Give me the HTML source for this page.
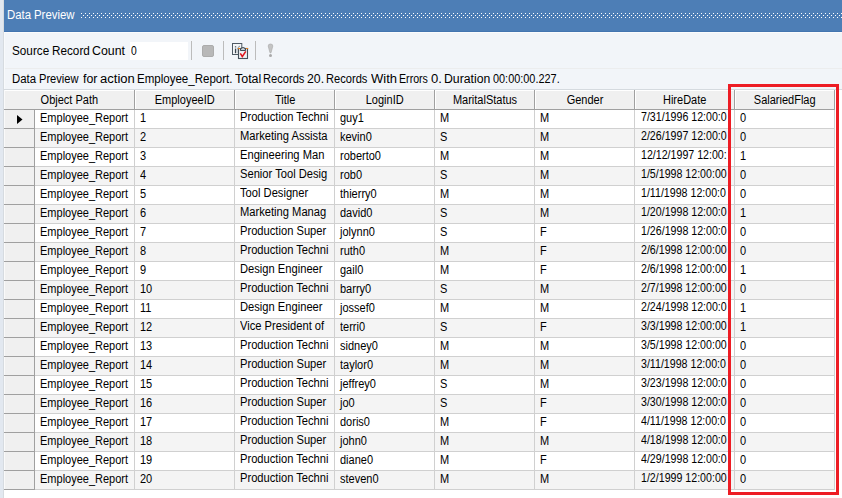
<!DOCTYPE html>
<html><head><meta charset="utf-8"><style>
*{margin:0;padding:0;box-sizing:border-box}
html,body{width:842px;height:498px;overflow:hidden;background:#fff}
body{position:relative;font-family:"Liberation Sans",sans-serif;color:#000}
.a{position:absolute}
.t{position:absolute;white-space:pre;font-size:12px;line-height:14px;transform:scaleX(0.917);transform-origin:0 0}
.h{position:absolute;white-space:pre;font-size:12px;line-height:14px}
</style></head><body>

<div class="a" style="left:0;top:0;width:3px;height:498px;background:#e2e8f0"></div>
<div class="a" style="left:3px;top:0;width:1px;height:498px;background:#d6dbe0"></div>
<div class="a" style="left:4px;top:0;width:838px;height:31px;background:#4d7eb6"></div>
<div class="a" style="left:4px;top:31px;width:838px;height:1px;background:#4475b0"></div>
<div class="a" style="left:4px;top:32px;width:838px;height:1px;background:#fbfcfd"></div>
<svg class="a" style="left:81px;top:13px" width="761" height="5"><defs><pattern id="p" width="4" height="4" patternUnits="userSpaceOnUse"><rect x="0" y="0" width="1" height="1" fill="#fff"/><rect x="2" y="2" width="1" height="1" fill="#fff"/><rect x="1" y="1" width="1" height="1" fill="#4474ab"/><rect x="3" y="3" width="1" height="1" fill="#4474ab"/></pattern></defs><rect width="761" height="5" fill="url(#p)"/></svg>
<div class="h" style="left:7px;top:8px;color:#fff;transform:scaleX(0.95);transform-origin:0 0">Data</div>
<div class="h" style="left:34px;top:8px;color:#fff;transform:scaleX(0.95);transform-origin:0 0">Preview</div>
<div class="a" style="left:4px;top:33px;width:838px;height:56px;background:#f2f5f9"></div>
<div class="a" style="left:4px;top:68px;width:838px;height:1px;background:#ecedee"></div>
<div class="a" style="left:4px;top:33px;width:1px;height:56px;background:#f8fafc"></div>
<div class="h" style="left:12px;top:44px;color:#000;transform:scaleX(0.9779);transform-origin:0 0">Source</div>
<div class="h" style="left:52px;top:44px;color:#000;transform:scaleX(0.9779);transform-origin:0 0">Record</div>
<div class="h" style="left:92px;top:44px;color:#000;transform:scaleX(1.03);transform-origin:0 0">Count</div>
<div class="a" style="left:130px;top:42px;width:58px;height:18px;background:#fff"></div>
<div class="h" style="left:130.5px;top:44px;transform:scaleX(0.86);transform-origin:0 0">0</div>
<div class="a" style="left:191px;top:41px;width:1px;height:19px;background:#bcbcbc"></div>
<div class="a" style="left:223px;top:41px;width:1px;height:19px;background:#bcbcbc"></div>
<div class="a" style="left:255px;top:41px;width:1px;height:19px;background:#bcbcbc"></div>
<div class="a" style="left:202px;top:45px;width:12px;height:12px;background:#b8b8b8;border:1px solid #acacac;border-radius:2px"></div>
<svg class="a" style="left:230px;top:41px" width="22" height="20" viewBox="0 0 22 20">
<rect x="2.5" y="2.5" width="9.3" height="11" fill="#f4f6f8" stroke="#4f5a64" stroke-width="1"/>
<rect x="4.9" y="5.3" width="1.3" height="1.1" fill="#3a4650"/><rect x="4.9" y="7.6" width="1.3" height="4.6" fill="#3a4650"/>
<path d="M8.2 12.3 L8.2 6.8 Q8.4 5.2 10 5.2 M7.2 7.8 L9.5 7.8" fill="none" stroke="#8d959c" stroke-width="1"/>
<rect x="8.5" y="7.5" width="9" height="10" fill="#eef1f3" stroke="#46515b" stroke-width="1.1"/>
<rect x="8" y="7" width="2.2" height="1.1" fill="#e5801f"/><rect x="16" y="7" width="2.2" height="1.1" fill="#e5801f"/>
<path d="M10.3 9.4 Q10.3 6.6 13 6.6 Q15.7 6.6 15.7 9.4 Z" fill="#dfe6ec" stroke="#2f3a44" stroke-width="1"/>
<path d="M10.3 12.3 L12.3 15.5 L15.8 10.3" fill="none" stroke="#e0141c" stroke-width="1.5"/>
</svg>
<svg class="a" style="left:266px;top:43px" width="9" height="16" viewBox="0 0 9 16">
<path d="M2.2 3 Q2.2 1 4.5 1 Q6.8 1 6.8 3 L5 9.8 L4 9.8 Z" fill="#c4c4c4" stroke="#acacac" stroke-width="0.7"/>
<circle cx="4.5" cy="12.6" r="1.5" fill="#a9a9a9"/>
</svg>
<div class="h" style="left:12px;top:72px;color:#000;transform:scaleX(0.95);transform-origin:0 0">Data</div>
<div class="h" style="left:39px;top:72px;color:#000;transform:scaleX(0.9256);transform-origin:0 0">Preview</div>
<div class="h" style="left:83px;top:72px;color:#000;transform:scaleX(1.0292);transform-origin:0 0">for</div>
<div class="h" style="left:100px;top:72px;color:#000;transform:scaleX(1.0857);transform-origin:0 0">action</div>
<div class="h" style="left:137px;top:72px;color:#000;transform:scaleX(0.9606);transform-origin:0 0">Employee_Report.</div>
<div class="h" style="left:235px;top:72px;color:#000;transform:scaleX(1.0382);transform-origin:0 0">Total</div>
<div class="h" style="left:263px;top:72px;color:#000;transform:scaleX(0.9262);transform-origin:0 0">Records</div>
<div class="h" style="left:307px;top:72px;color:#000;transform:scaleX(1.0231);transform-origin:0 0">20.</div>
<div class="h" style="left:326px;top:72px;color:#000;transform:scaleX(0.9262);transform-origin:0 0">Records</div>
<div class="h" style="left:371px;top:72px;color:#000;transform:scaleX(1.0857);transform-origin:0 0">With</div>
<div class="h" style="left:399px;top:72px;color:#000;transform:scaleX(0.8857);transform-origin:0 0">Errors</div>
<div class="h" style="left:431px;top:72px;color:#000;transform:scaleX(1.0857);transform-origin:0 0">0.</div>
<div class="h" style="left:444px;top:72px;color:#000;transform:scaleX(1.0218);transform-origin:0 0">Duration</div>
<div class="h" style="left:493px;top:72px;color:#000;transform:scaleX(0.9081);transform-origin:0 0">00:00:00.227.</div>
<div class="a" style="left:4px;top:89px;width:838px;height:1px;background:#d5dadf"></div>
<div class="a" style="left:4px;top:90px;width:831px;height:19px;background:#f0f0f0;border-top:1px solid #fff"></div>
<div class="a" style="left:4px;top:109px;width:831px;height:1px;background:#a0a0a0"></div>
<div class="a" style="left:134px;top:90px;width:1px;height:19px;background:#a0a0a0"></div>
<div class="a" style="left:135px;top:91px;width:1px;height:18px;background:#fff"></div>
<div class="a" style="left:234px;top:90px;width:1px;height:19px;background:#a0a0a0"></div>
<div class="a" style="left:235px;top:91px;width:1px;height:18px;background:#fff"></div>
<div class="a" style="left:334px;top:90px;width:1px;height:19px;background:#a0a0a0"></div>
<div class="a" style="left:335px;top:91px;width:1px;height:18px;background:#fff"></div>
<div class="a" style="left:434px;top:90px;width:1px;height:19px;background:#a0a0a0"></div>
<div class="a" style="left:435px;top:91px;width:1px;height:18px;background:#fff"></div>
<div class="a" style="left:534px;top:90px;width:1px;height:19px;background:#a0a0a0"></div>
<div class="a" style="left:535px;top:91px;width:1px;height:18px;background:#fff"></div>
<div class="a" style="left:634px;top:90px;width:1px;height:19px;background:#a0a0a0"></div>
<div class="a" style="left:635px;top:91px;width:1px;height:18px;background:#fff"></div>
<div class="a" style="left:734px;top:90px;width:1px;height:19px;background:#a0a0a0"></div>
<div class="a" style="left:735px;top:91px;width:1px;height:18px;background:#fff"></div>
<div class="a" style="left:834px;top:90px;width:1px;height:19px;background:#a0a0a0"></div>
<div class="h" style="left:19px;width:100px;text-align:center;top:93px"><span style="display:inline-block;transform:scaleX(0.917);transform-origin:50% 0">Object Path</span></div>
<div class="h" style="left:135px;width:100px;text-align:center;top:93px"><span style="display:inline-block;transform:scaleX(0.917);transform-origin:50% 0">EmployeeID</span></div>
<div class="h" style="left:235.5px;width:100px;text-align:center;top:93px"><span style="display:inline-block;transform:scaleX(0.917);transform-origin:50% 0">Title</span></div>
<div class="h" style="left:335px;width:100px;text-align:center;top:93px"><span style="display:inline-block;transform:scaleX(0.917);transform-origin:50% 0">LoginID</span></div>
<div class="h" style="left:435px;width:100px;text-align:center;top:93px"><span style="display:inline-block;transform:scaleX(0.917);transform-origin:50% 0">MaritalStatus</span></div>
<div class="h" style="left:535.5px;width:100px;text-align:center;top:93px"><span style="display:inline-block;transform:scaleX(0.917);transform-origin:50% 0">Gender</span></div>
<div class="h" style="left:635px;width:100px;text-align:center;top:93px"><span style="display:inline-block;transform:scaleX(0.917);transform-origin:50% 0">HireDate</span></div>
<div class="h" style="left:735px;width:100px;text-align:center;top:93px"><span style="display:inline-block;transform:scaleX(0.917);transform-origin:50% 0">SalariedFlag</span></div>
<div class="a" style="left:4px;top:110px;width:30px;height:18px;background:#f0f0f0"></div>
<div class="a" style="left:35px;top:110px;width:800px;height:18px;background:#ffffff"></div>
<div class="a" style="left:4px;top:128px;width:30px;height:1px;background:#a0a0a0"></div>
<div class="a" style="left:35px;top:128px;width:800px;height:1px;background:#d0d0d0"></div>
<div class="t" style="left:40px;top:111px;transform:scaleX(0.917)">Employee_Report</div>
<div class="t" style="left:140px;top:111px;transform:scaleX(0.917)">1</div>
<div class="t" style="left:240px;top:110px;transform:scaleX(0.93)">Production Techni</div>
<div class="t" style="left:340px;top:111px;transform:scaleX(0.917)">guy1</div>
<div class="t" style="left:440px;top:111px;transform:scaleX(0.917)">M</div>
<div class="t" style="left:540px;top:111px;transform:scaleX(0.917)">M</div>
<div class="t" style="left:641px;top:110px;transform:scaleX(0.886)">7/31/1996 12:00:0</div>
<div class="t" style="left:740px;top:111px;transform:scaleX(0.917)">0</div>
<div class="a" style="left:4px;top:129px;width:30px;height:18px;background:#f0f0f0"></div>
<div class="a" style="left:35px;top:129px;width:800px;height:18px;background:#f4f4f4"></div>
<div class="a" style="left:4px;top:147px;width:30px;height:1px;background:#a0a0a0"></div>
<div class="a" style="left:35px;top:147px;width:800px;height:1px;background:#d0d0d0"></div>
<div class="t" style="left:40px;top:130px;transform:scaleX(0.917)">Employee_Report</div>
<div class="t" style="left:140px;top:130px;transform:scaleX(0.917)">2</div>
<div class="t" style="left:240px;top:129px;transform:scaleX(0.93)">Marketing Assista</div>
<div class="t" style="left:340px;top:130px;transform:scaleX(0.917)">kevin0</div>
<div class="t" style="left:440px;top:130px;transform:scaleX(0.917)">S</div>
<div class="t" style="left:540px;top:130px;transform:scaleX(0.917)">M</div>
<div class="t" style="left:641px;top:129px;transform:scaleX(0.886)">2/26/1997 12:00:0</div>
<div class="t" style="left:740px;top:130px;transform:scaleX(0.917)">0</div>
<div class="a" style="left:4px;top:148px;width:30px;height:18px;background:#f0f0f0"></div>
<div class="a" style="left:35px;top:148px;width:800px;height:18px;background:#ffffff"></div>
<div class="a" style="left:4px;top:166px;width:30px;height:1px;background:#a0a0a0"></div>
<div class="a" style="left:35px;top:166px;width:800px;height:1px;background:#d0d0d0"></div>
<div class="t" style="left:40px;top:149px;transform:scaleX(0.917)">Employee_Report</div>
<div class="t" style="left:140px;top:149px;transform:scaleX(0.917)">3</div>
<div class="t" style="left:240px;top:148px;transform:scaleX(0.93)">Engineering Man</div>
<div class="t" style="left:340px;top:149px;transform:scaleX(0.917)">roberto0</div>
<div class="t" style="left:440px;top:149px;transform:scaleX(0.917)">M</div>
<div class="t" style="left:540px;top:149px;transform:scaleX(0.917)">M</div>
<div class="t" style="left:641px;top:148px;transform:scaleX(0.886)">12/12/1997 12:00:</div>
<div class="t" style="left:740px;top:149px;transform:scaleX(0.917)">1</div>
<div class="a" style="left:4px;top:167px;width:30px;height:18px;background:#f0f0f0"></div>
<div class="a" style="left:35px;top:167px;width:800px;height:18px;background:#f4f4f4"></div>
<div class="a" style="left:4px;top:185px;width:30px;height:1px;background:#a0a0a0"></div>
<div class="a" style="left:35px;top:185px;width:800px;height:1px;background:#d0d0d0"></div>
<div class="t" style="left:40px;top:168px;transform:scaleX(0.917)">Employee_Report</div>
<div class="t" style="left:140px;top:168px;transform:scaleX(0.917)">4</div>
<div class="t" style="left:240px;top:167px;transform:scaleX(0.93)">Senior Tool Desig</div>
<div class="t" style="left:340px;top:168px;transform:scaleX(0.917)">rob0</div>
<div class="t" style="left:440px;top:168px;transform:scaleX(0.917)">S</div>
<div class="t" style="left:540px;top:168px;transform:scaleX(0.917)">M</div>
<div class="t" style="left:641px;top:167px;transform:scaleX(0.886)">1/5/1998 12:00:00</div>
<div class="t" style="left:740px;top:168px;transform:scaleX(0.917)">0</div>
<div class="a" style="left:4px;top:186px;width:30px;height:18px;background:#f0f0f0"></div>
<div class="a" style="left:35px;top:186px;width:800px;height:18px;background:#ffffff"></div>
<div class="a" style="left:4px;top:204px;width:30px;height:1px;background:#a0a0a0"></div>
<div class="a" style="left:35px;top:204px;width:800px;height:1px;background:#d0d0d0"></div>
<div class="t" style="left:40px;top:187px;transform:scaleX(0.917)">Employee_Report</div>
<div class="t" style="left:140px;top:187px;transform:scaleX(0.917)">5</div>
<div class="t" style="left:240px;top:186px;transform:scaleX(0.93)">Tool Designer</div>
<div class="t" style="left:340px;top:187px;transform:scaleX(0.917)">thierry0</div>
<div class="t" style="left:440px;top:187px;transform:scaleX(0.917)">M</div>
<div class="t" style="left:540px;top:187px;transform:scaleX(0.917)">M</div>
<div class="t" style="left:641px;top:186px;transform:scaleX(0.886)">1/11/1998 12:00:0</div>
<div class="t" style="left:740px;top:187px;transform:scaleX(0.917)">0</div>
<div class="a" style="left:4px;top:205px;width:30px;height:18px;background:#f0f0f0"></div>
<div class="a" style="left:35px;top:205px;width:800px;height:18px;background:#f4f4f4"></div>
<div class="a" style="left:4px;top:223px;width:30px;height:1px;background:#a0a0a0"></div>
<div class="a" style="left:35px;top:223px;width:800px;height:1px;background:#d0d0d0"></div>
<div class="t" style="left:40px;top:206px;transform:scaleX(0.917)">Employee_Report</div>
<div class="t" style="left:140px;top:206px;transform:scaleX(0.917)">6</div>
<div class="t" style="left:240px;top:205px;transform:scaleX(0.93)">Marketing Manag</div>
<div class="t" style="left:340px;top:206px;transform:scaleX(0.917)">david0</div>
<div class="t" style="left:440px;top:206px;transform:scaleX(0.917)">S</div>
<div class="t" style="left:540px;top:206px;transform:scaleX(0.917)">M</div>
<div class="t" style="left:641px;top:205px;transform:scaleX(0.886)">1/20/1998 12:00:0</div>
<div class="t" style="left:740px;top:206px;transform:scaleX(0.917)">1</div>
<div class="a" style="left:4px;top:224px;width:30px;height:18px;background:#f0f0f0"></div>
<div class="a" style="left:35px;top:224px;width:800px;height:18px;background:#ffffff"></div>
<div class="a" style="left:4px;top:242px;width:30px;height:1px;background:#a0a0a0"></div>
<div class="a" style="left:35px;top:242px;width:800px;height:1px;background:#d0d0d0"></div>
<div class="t" style="left:40px;top:225px;transform:scaleX(0.917)">Employee_Report</div>
<div class="t" style="left:140px;top:225px;transform:scaleX(0.917)">7</div>
<div class="t" style="left:240px;top:224px;transform:scaleX(0.93)">Production Super</div>
<div class="t" style="left:340px;top:225px;transform:scaleX(0.917)">jolynn0</div>
<div class="t" style="left:440px;top:225px;transform:scaleX(0.917)">S</div>
<div class="t" style="left:540px;top:225px;transform:scaleX(0.917)">F</div>
<div class="t" style="left:641px;top:224px;transform:scaleX(0.886)">1/26/1998 12:00:0</div>
<div class="t" style="left:740px;top:225px;transform:scaleX(0.917)">0</div>
<div class="a" style="left:4px;top:243px;width:30px;height:18px;background:#f0f0f0"></div>
<div class="a" style="left:35px;top:243px;width:800px;height:18px;background:#f4f4f4"></div>
<div class="a" style="left:4px;top:261px;width:30px;height:1px;background:#a0a0a0"></div>
<div class="a" style="left:35px;top:261px;width:800px;height:1px;background:#d0d0d0"></div>
<div class="t" style="left:40px;top:244px;transform:scaleX(0.917)">Employee_Report</div>
<div class="t" style="left:140px;top:244px;transform:scaleX(0.917)">8</div>
<div class="t" style="left:240px;top:243px;transform:scaleX(0.93)">Production Techni</div>
<div class="t" style="left:340px;top:244px;transform:scaleX(0.917)">ruth0</div>
<div class="t" style="left:440px;top:244px;transform:scaleX(0.917)">M</div>
<div class="t" style="left:540px;top:244px;transform:scaleX(0.917)">F</div>
<div class="t" style="left:641px;top:243px;transform:scaleX(0.886)">2/6/1998 12:00:00</div>
<div class="t" style="left:740px;top:244px;transform:scaleX(0.917)">0</div>
<div class="a" style="left:4px;top:262px;width:30px;height:18px;background:#f0f0f0"></div>
<div class="a" style="left:35px;top:262px;width:800px;height:18px;background:#ffffff"></div>
<div class="a" style="left:4px;top:280px;width:30px;height:1px;background:#a0a0a0"></div>
<div class="a" style="left:35px;top:280px;width:800px;height:1px;background:#d0d0d0"></div>
<div class="t" style="left:40px;top:263px;transform:scaleX(0.917)">Employee_Report</div>
<div class="t" style="left:140px;top:263px;transform:scaleX(0.917)">9</div>
<div class="t" style="left:240px;top:262px;transform:scaleX(0.93)">Design Engineer</div>
<div class="t" style="left:340px;top:263px;transform:scaleX(0.917)">gail0</div>
<div class="t" style="left:440px;top:263px;transform:scaleX(0.917)">M</div>
<div class="t" style="left:540px;top:263px;transform:scaleX(0.917)">F</div>
<div class="t" style="left:641px;top:262px;transform:scaleX(0.886)">2/6/1998 12:00:00</div>
<div class="t" style="left:740px;top:263px;transform:scaleX(0.917)">1</div>
<div class="a" style="left:4px;top:281px;width:30px;height:18px;background:#f0f0f0"></div>
<div class="a" style="left:35px;top:281px;width:800px;height:18px;background:#f4f4f4"></div>
<div class="a" style="left:4px;top:299px;width:30px;height:1px;background:#a0a0a0"></div>
<div class="a" style="left:35px;top:299px;width:800px;height:1px;background:#d0d0d0"></div>
<div class="t" style="left:40px;top:282px;transform:scaleX(0.917)">Employee_Report</div>
<div class="t" style="left:140px;top:282px;transform:scaleX(0.917)">10</div>
<div class="t" style="left:240px;top:281px;transform:scaleX(0.93)">Production Techni</div>
<div class="t" style="left:340px;top:282px;transform:scaleX(0.917)">barry0</div>
<div class="t" style="left:440px;top:282px;transform:scaleX(0.917)">S</div>
<div class="t" style="left:540px;top:282px;transform:scaleX(0.917)">M</div>
<div class="t" style="left:641px;top:281px;transform:scaleX(0.886)">2/7/1998 12:00:00</div>
<div class="t" style="left:740px;top:282px;transform:scaleX(0.917)">0</div>
<div class="a" style="left:4px;top:300px;width:30px;height:18px;background:#f0f0f0"></div>
<div class="a" style="left:35px;top:300px;width:800px;height:18px;background:#ffffff"></div>
<div class="a" style="left:4px;top:318px;width:30px;height:1px;background:#a0a0a0"></div>
<div class="a" style="left:35px;top:318px;width:800px;height:1px;background:#d0d0d0"></div>
<div class="t" style="left:40px;top:301px;transform:scaleX(0.917)">Employee_Report</div>
<div class="t" style="left:140px;top:301px;transform:scaleX(0.917)">11</div>
<div class="t" style="left:240px;top:300px;transform:scaleX(0.93)">Design Engineer</div>
<div class="t" style="left:340px;top:301px;transform:scaleX(0.917)">jossef0</div>
<div class="t" style="left:440px;top:301px;transform:scaleX(0.917)">M</div>
<div class="t" style="left:540px;top:301px;transform:scaleX(0.917)">M</div>
<div class="t" style="left:641px;top:300px;transform:scaleX(0.886)">2/24/1998 12:00:0</div>
<div class="t" style="left:740px;top:301px;transform:scaleX(0.917)">1</div>
<div class="a" style="left:4px;top:319px;width:30px;height:18px;background:#f0f0f0"></div>
<div class="a" style="left:35px;top:319px;width:800px;height:18px;background:#f4f4f4"></div>
<div class="a" style="left:4px;top:337px;width:30px;height:1px;background:#a0a0a0"></div>
<div class="a" style="left:35px;top:337px;width:800px;height:1px;background:#d0d0d0"></div>
<div class="t" style="left:40px;top:320px;transform:scaleX(0.917)">Employee_Report</div>
<div class="t" style="left:140px;top:320px;transform:scaleX(0.917)">12</div>
<div class="t" style="left:240px;top:319px;transform:scaleX(0.93)">Vice President of</div>
<div class="t" style="left:340px;top:320px;transform:scaleX(0.917)">terri0</div>
<div class="t" style="left:440px;top:320px;transform:scaleX(0.917)">S</div>
<div class="t" style="left:540px;top:320px;transform:scaleX(0.917)">F</div>
<div class="t" style="left:641px;top:319px;transform:scaleX(0.886)">3/3/1998 12:00:00</div>
<div class="t" style="left:740px;top:320px;transform:scaleX(0.917)">1</div>
<div class="a" style="left:4px;top:338px;width:30px;height:18px;background:#f0f0f0"></div>
<div class="a" style="left:35px;top:338px;width:800px;height:18px;background:#ffffff"></div>
<div class="a" style="left:4px;top:356px;width:30px;height:1px;background:#a0a0a0"></div>
<div class="a" style="left:35px;top:356px;width:800px;height:1px;background:#d0d0d0"></div>
<div class="t" style="left:40px;top:339px;transform:scaleX(0.917)">Employee_Report</div>
<div class="t" style="left:140px;top:339px;transform:scaleX(0.917)">13</div>
<div class="t" style="left:240px;top:338px;transform:scaleX(0.93)">Production Techni</div>
<div class="t" style="left:340px;top:339px;transform:scaleX(0.917)">sidney0</div>
<div class="t" style="left:440px;top:339px;transform:scaleX(0.917)">M</div>
<div class="t" style="left:540px;top:339px;transform:scaleX(0.917)">M</div>
<div class="t" style="left:641px;top:338px;transform:scaleX(0.886)">3/5/1998 12:00:00</div>
<div class="t" style="left:740px;top:339px;transform:scaleX(0.917)">0</div>
<div class="a" style="left:4px;top:357px;width:30px;height:18px;background:#f0f0f0"></div>
<div class="a" style="left:35px;top:357px;width:800px;height:18px;background:#f4f4f4"></div>
<div class="a" style="left:4px;top:375px;width:30px;height:1px;background:#a0a0a0"></div>
<div class="a" style="left:35px;top:375px;width:800px;height:1px;background:#d0d0d0"></div>
<div class="t" style="left:40px;top:358px;transform:scaleX(0.917)">Employee_Report</div>
<div class="t" style="left:140px;top:358px;transform:scaleX(0.917)">14</div>
<div class="t" style="left:240px;top:357px;transform:scaleX(0.93)">Production Super</div>
<div class="t" style="left:340px;top:358px;transform:scaleX(0.917)">taylor0</div>
<div class="t" style="left:440px;top:358px;transform:scaleX(0.917)">M</div>
<div class="t" style="left:540px;top:358px;transform:scaleX(0.917)">M</div>
<div class="t" style="left:641px;top:357px;transform:scaleX(0.886)">3/11/1998 12:00:0</div>
<div class="t" style="left:740px;top:358px;transform:scaleX(0.917)">0</div>
<div class="a" style="left:4px;top:376px;width:30px;height:18px;background:#f0f0f0"></div>
<div class="a" style="left:35px;top:376px;width:800px;height:18px;background:#ffffff"></div>
<div class="a" style="left:4px;top:394px;width:30px;height:1px;background:#a0a0a0"></div>
<div class="a" style="left:35px;top:394px;width:800px;height:1px;background:#d0d0d0"></div>
<div class="t" style="left:40px;top:377px;transform:scaleX(0.917)">Employee_Report</div>
<div class="t" style="left:140px;top:377px;transform:scaleX(0.917)">15</div>
<div class="t" style="left:240px;top:376px;transform:scaleX(0.93)">Production Techni</div>
<div class="t" style="left:340px;top:377px;transform:scaleX(0.917)">jeffrey0</div>
<div class="t" style="left:440px;top:377px;transform:scaleX(0.917)">S</div>
<div class="t" style="left:540px;top:377px;transform:scaleX(0.917)">M</div>
<div class="t" style="left:641px;top:376px;transform:scaleX(0.886)">3/23/1998 12:00:0</div>
<div class="t" style="left:740px;top:377px;transform:scaleX(0.917)">0</div>
<div class="a" style="left:4px;top:395px;width:30px;height:18px;background:#f0f0f0"></div>
<div class="a" style="left:35px;top:395px;width:800px;height:18px;background:#f4f4f4"></div>
<div class="a" style="left:4px;top:413px;width:30px;height:1px;background:#a0a0a0"></div>
<div class="a" style="left:35px;top:413px;width:800px;height:1px;background:#d0d0d0"></div>
<div class="t" style="left:40px;top:396px;transform:scaleX(0.917)">Employee_Report</div>
<div class="t" style="left:140px;top:396px;transform:scaleX(0.917)">16</div>
<div class="t" style="left:240px;top:395px;transform:scaleX(0.93)">Production Super</div>
<div class="t" style="left:340px;top:396px;transform:scaleX(0.917)">jo0</div>
<div class="t" style="left:440px;top:396px;transform:scaleX(0.917)">S</div>
<div class="t" style="left:540px;top:396px;transform:scaleX(0.917)">F</div>
<div class="t" style="left:641px;top:395px;transform:scaleX(0.886)">3/30/1998 12:00:0</div>
<div class="t" style="left:740px;top:396px;transform:scaleX(0.917)">0</div>
<div class="a" style="left:4px;top:414px;width:30px;height:18px;background:#f0f0f0"></div>
<div class="a" style="left:35px;top:414px;width:800px;height:18px;background:#ffffff"></div>
<div class="a" style="left:4px;top:432px;width:30px;height:1px;background:#a0a0a0"></div>
<div class="a" style="left:35px;top:432px;width:800px;height:1px;background:#d0d0d0"></div>
<div class="t" style="left:40px;top:415px;transform:scaleX(0.917)">Employee_Report</div>
<div class="t" style="left:140px;top:415px;transform:scaleX(0.917)">17</div>
<div class="t" style="left:240px;top:414px;transform:scaleX(0.93)">Production Techni</div>
<div class="t" style="left:340px;top:415px;transform:scaleX(0.917)">doris0</div>
<div class="t" style="left:440px;top:415px;transform:scaleX(0.917)">M</div>
<div class="t" style="left:540px;top:415px;transform:scaleX(0.917)">F</div>
<div class="t" style="left:641px;top:414px;transform:scaleX(0.886)">4/11/1998 12:00:0</div>
<div class="t" style="left:740px;top:415px;transform:scaleX(0.917)">0</div>
<div class="a" style="left:4px;top:433px;width:30px;height:18px;background:#f0f0f0"></div>
<div class="a" style="left:35px;top:433px;width:800px;height:18px;background:#f4f4f4"></div>
<div class="a" style="left:4px;top:451px;width:30px;height:1px;background:#a0a0a0"></div>
<div class="a" style="left:35px;top:451px;width:800px;height:1px;background:#d0d0d0"></div>
<div class="t" style="left:40px;top:434px;transform:scaleX(0.917)">Employee_Report</div>
<div class="t" style="left:140px;top:434px;transform:scaleX(0.917)">18</div>
<div class="t" style="left:240px;top:433px;transform:scaleX(0.93)">Production Super</div>
<div class="t" style="left:340px;top:434px;transform:scaleX(0.917)">john0</div>
<div class="t" style="left:440px;top:434px;transform:scaleX(0.917)">M</div>
<div class="t" style="left:540px;top:434px;transform:scaleX(0.917)">M</div>
<div class="t" style="left:641px;top:433px;transform:scaleX(0.886)">4/18/1998 12:00:0</div>
<div class="t" style="left:740px;top:434px;transform:scaleX(0.917)">0</div>
<div class="a" style="left:4px;top:452px;width:30px;height:18px;background:#f0f0f0"></div>
<div class="a" style="left:35px;top:452px;width:800px;height:18px;background:#ffffff"></div>
<div class="a" style="left:4px;top:470px;width:30px;height:1px;background:#a0a0a0"></div>
<div class="a" style="left:35px;top:470px;width:800px;height:1px;background:#d0d0d0"></div>
<div class="t" style="left:40px;top:453px;transform:scaleX(0.917)">Employee_Report</div>
<div class="t" style="left:140px;top:453px;transform:scaleX(0.917)">19</div>
<div class="t" style="left:240px;top:452px;transform:scaleX(0.93)">Production Techni</div>
<div class="t" style="left:340px;top:453px;transform:scaleX(0.917)">diane0</div>
<div class="t" style="left:440px;top:453px;transform:scaleX(0.917)">M</div>
<div class="t" style="left:540px;top:453px;transform:scaleX(0.917)">F</div>
<div class="t" style="left:641px;top:452px;transform:scaleX(0.886)">4/29/1998 12:00:0</div>
<div class="t" style="left:740px;top:453px;transform:scaleX(0.917)">0</div>
<div class="a" style="left:4px;top:471px;width:30px;height:18px;background:#f0f0f0"></div>
<div class="a" style="left:35px;top:471px;width:800px;height:18px;background:#f4f4f4"></div>
<div class="a" style="left:4px;top:489px;width:30px;height:1px;background:#a0a0a0"></div>
<div class="a" style="left:35px;top:489px;width:800px;height:1px;background:#d0d0d0"></div>
<div class="t" style="left:40px;top:472px;transform:scaleX(0.917)">Employee_Report</div>
<div class="t" style="left:140px;top:472px;transform:scaleX(0.917)">20</div>
<div class="t" style="left:240px;top:471px;transform:scaleX(0.93)">Production Techni</div>
<div class="t" style="left:340px;top:472px;transform:scaleX(0.917)">steven0</div>
<div class="t" style="left:440px;top:472px;transform:scaleX(0.917)">M</div>
<div class="t" style="left:540px;top:472px;transform:scaleX(0.917)">M</div>
<div class="t" style="left:641px;top:471px;transform:scaleX(0.886)">1/2/1999 12:00:00</div>
<div class="t" style="left:740px;top:472px;transform:scaleX(0.917)">0</div>
<div class="a" style="left:34px;top:110px;width:1px;height:380px;background:#a0a0a0"></div>
<div class="a" style="left:134px;top:110px;width:1px;height:380px;background:#d0d0d0"></div>
<div class="a" style="left:234px;top:110px;width:1px;height:380px;background:#d0d0d0"></div>
<div class="a" style="left:334px;top:110px;width:1px;height:380px;background:#d0d0d0"></div>
<div class="a" style="left:434px;top:110px;width:1px;height:380px;background:#d0d0d0"></div>
<div class="a" style="left:534px;top:110px;width:1px;height:380px;background:#d0d0d0"></div>
<div class="a" style="left:634px;top:110px;width:1px;height:380px;background:#d0d0d0"></div>
<div class="a" style="left:734px;top:110px;width:1px;height:380px;background:#d0d0d0"></div>
<div class="a" style="left:834px;top:110px;width:1px;height:380px;background:#d0d0d0"></div>
<div class="a" style="left:4px;top:90px;width:1px;height:19px;background:#fafafa"></div>
<div class="a" style="left:4px;top:110px;width:1px;height:18px;background:#fafafa"></div>
<div class="a" style="left:4px;top:129px;width:1px;height:18px;background:#fafafa"></div>
<div class="a" style="left:4px;top:148px;width:1px;height:18px;background:#fafafa"></div>
<div class="a" style="left:4px;top:167px;width:1px;height:18px;background:#fafafa"></div>
<div class="a" style="left:4px;top:186px;width:1px;height:18px;background:#fafafa"></div>
<div class="a" style="left:4px;top:205px;width:1px;height:18px;background:#fafafa"></div>
<div class="a" style="left:4px;top:224px;width:1px;height:18px;background:#fafafa"></div>
<div class="a" style="left:4px;top:243px;width:1px;height:18px;background:#fafafa"></div>
<div class="a" style="left:4px;top:262px;width:1px;height:18px;background:#fafafa"></div>
<div class="a" style="left:4px;top:281px;width:1px;height:18px;background:#fafafa"></div>
<div class="a" style="left:4px;top:300px;width:1px;height:18px;background:#fafafa"></div>
<div class="a" style="left:4px;top:319px;width:1px;height:18px;background:#fafafa"></div>
<div class="a" style="left:4px;top:338px;width:1px;height:18px;background:#fafafa"></div>
<div class="a" style="left:4px;top:357px;width:1px;height:18px;background:#fafafa"></div>
<div class="a" style="left:4px;top:376px;width:1px;height:18px;background:#fafafa"></div>
<div class="a" style="left:4px;top:395px;width:1px;height:18px;background:#fafafa"></div>
<div class="a" style="left:4px;top:414px;width:1px;height:18px;background:#fafafa"></div>
<div class="a" style="left:4px;top:433px;width:1px;height:18px;background:#fafafa"></div>
<div class="a" style="left:4px;top:452px;width:1px;height:18px;background:#fafafa"></div>
<div class="a" style="left:4px;top:471px;width:1px;height:18px;background:#fafafa"></div>
<svg class="a" style="left:17px;top:115px" width="7" height="10"><path d="M0 0 L5.5 4.5 L0 9 Z" fill="#000"/></svg>
<div class="a" style="left:728px;top:84px;width:111px;height:411px;border:3px solid #ed1c24"></div>
</body></html>
